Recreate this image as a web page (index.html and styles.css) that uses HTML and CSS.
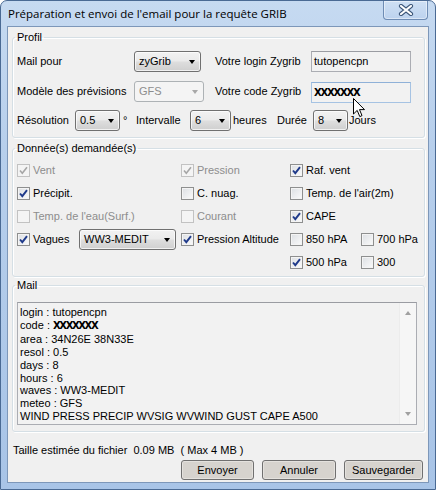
FILE: index.html
```html
<!DOCTYPE html>
<html lang="fr">
<head>
    <meta charset="UTF-8">
    <title>Préparation et envoi de l'email pour la requête GRIB</title>
    <link rel="stylesheet" href="styles.css">
</head>
<body>
    <div class="window">
        <div class="titlebar">
            <span class="title">Préparation et envoi de l'email pour la requête GRIB</span>
            <div class="close">
                <svg width="16" height="12" viewBox="0 0 16 12">
                    <path d="M3 2 L13 10 M13 2 L3 10" stroke="#3b5578" stroke-width="4.2" stroke-linecap="round"/>
                    <path d="M3 2 L13 10 M13 2 L3 10" stroke="#ffffff" stroke-width="2.2" stroke-linecap="round"/>
                </svg>
            </div>
        </div>

        <div class="client">
            <fieldset class="group profil">
                <legend>Profil</legend>
                <div class="prow">
                    <span>Mail pour</span>
                    <div class="combo w67"><span>zyGrib</span><i class="arrow"></i></div>
                    <span>Votre login Zygrib</span>
                    <div class="field">tutopencpn</div>
                </div>
                <div class="prow r2">
                    <span>Modèle des prévisions</span>
                    <div class="combo w70 disabled"><span>GFS</span><i class="arrow"></i></div>
                    <span>Votre code Zygrib</span>
                    <div class="field hover"><b class="mask">XXXXXXX</b></div>
                </div>
                <div class="prow3">
                    <span class="l-res">Résolution</span>
                    <div class="combo w45"><span>0.5</span><i class="arrow"></i></div>
                    <span class="l-deg">°</span>
                    <span class="l-int">Intervalle</span>
                    <div class="combo w41"><span>6</span><i class="arrow"></i></div>
                    <span class="l-hrs">heures</span>
                    <span class="l-dur">Durée</span>
                    <div class="combo w35"><span>8</span><i class="arrow"></i></div>
                    <span class="l-jrs">Jours</span>
                </div>
            </fieldset>

            <fieldset class="group data">
                <legend>Donnée(s) demandée(s)</legend>
                <div class="grid">
                    <label class="chk off"><i class="cb on"></i>Vent</label>
                    <label class="chk off"><i class="cb on"></i>Pression</label>
                    <label class="chk"><i class="cb on"></i>Raf. vent</label>
                    <span></span>

                    <label class="chk"><i class="cb on"></i>Précipit.</label>
                    <label class="chk"><i class="cb"></i>C. nuag.</label>
                    <label class="chk span2"><i class="cb"></i>Temp. de l'air(2m)</label>

                    <label class="chk off"><i class="cb"></i>Temp. de l'eau(Surf.)</label>
                    <label class="chk off"><i class="cb"></i>Courant</label>
                    <label class="chk"><i class="cb on"></i>CAPE</label>
                    <span></span>

                    <div class="chk">
                        <label class="chk"><i class="cb on"></i>Vagues</label>
                        <div class="combo w97"><span>WW3-MEDIT</span><i class="arrow"></i></div>
                    </div>
                    <label class="chk"><i class="cb on"></i>Pression Altitude</label>
                    <label class="chk"><i class="cb"></i>850 hPA</label>
                    <label class="chk"><i class="cb"></i>700 hPa</label>

                    <span></span>
                    <span></span>
                    <label class="chk"><i class="cb on"></i>500 hPa</label>
                    <label class="chk"><i class="cb"></i>300</label>
                </div>
            </fieldset>

            <fieldset class="group mail">
                <legend>Mail</legend>
                <div class="textarea">
                    <div class="lines">
                        <div>login : tutopencpn</div>
                        <div>code : <b class="mask">XXXXXXX</b></div>
                        <div>area : 34N26E 38N33E</div>
                        <div>resol : 0.5</div>
                        <div>days : 8</div>
                        <div>hours : 6</div>
                        <div>waves : WW3-MEDIT</div>
                        <div>meteo : GFS</div>
                        <div>WIND PRESS PRECIP WVSIG WVWIND GUST CAPE A500</div>
                    </div>
                    <div class="scrollbar">
                        <i class="up"></i>
                        <i class="down"></i>
                    </div>
                </div>
            </fieldset>

            <div class="size">Taille estimée du fichier&nbsp; 0.09 MB &nbsp;( Max 4 MB )</div>

            <div class="buttons">
                <div class="btn b-env">Envoyer</div>
                <div class="btn b-ann">Annuler</div>
                <div class="btn b-sav">Sauvegarder</div>
            </div>
        </div>

        <svg class="cursor" width="13" height="20" viewBox="0 0 13 20">
            <path d="M0.5 0.5 L0.5 16 L4.2 12.4 L6.8 18.6 L9 17.6 L6.5 11.6 L11.5 11.6 Z" fill="#ffffff" stroke="#000000" stroke-width="1"/>
        </svg>
    </div>
</body>
</html>
```

FILE: styles.css
```css
* {
    box-sizing: border-box;
}

body {
    margin: 0;
    font-family: "Liberation Sans", Arial, sans-serif;
    font-size: 11px;
    line-height: 13px;
    color: #000;
    background: #ffffff;
}

.window {
    position: relative;
    width: 436px;
    height: 490px;
    border: 1px solid #4a6a94;
    border-radius: 7px 7px 0 0;
    background: linear-gradient(#c6daf1, #b7cfec 30%, #a8c4e7);
    padding: 0 6px 6px 6px;
    display: flex;
    flex-direction: column;
}

.titlebar {
    height: 25px;
    display: flex;
    align-items: center;
    justify-content: space-between;
    padding-left: 1px;
}

.title {
    font-family: "Open Sans", "Noto Sans", sans-serif;
    font-size: 11.5px;
    color: #000;
    margin-top: -1px;
}

.close {
    align-self: flex-start;
    width: 45px;
    height: 19px;
    margin-right: 1px;
    border: 1px solid #6e8cb4;
    border-top: none;
    border-radius: 0 0 4px 4px;
    background: linear-gradient(#cfe0f4, #bcd2ee);
    box-shadow: inset 0 0 0 1px rgba(255,255,255,0.45);
    display: flex;
    align-items: center;
    justify-content: center;
}

.client {
    flex: 1;
    border: 1px solid #7d97b9;
    background: #f0f0f0;
    padding: 0 3px 0 4px;
    display: flex;
    flex-direction: column;
}

/* group boxes */
.group {
    margin: 0;
    border: 1px solid #d5dfe5;
    border-radius: 3px;
    box-shadow: inset 1px 1px 0 #ffffff, 1px 1px 0 #ffffff;
    min-width: 0;
}

.group legend {
    padding: 0 2px;
    margin-left: -2px;
    line-height: 13px;
}

.profil {
    margin-top: 4px;
    padding: 7px 3px 6px 4px;
}

.data {
    margin-top: 4px;
    padding: 4px 3px 2px 4px;
}

.mail {
    margin-top: 2px;
    padding: 10px 6px 6px 4px;
}

/* profil rows */
.prow {
    display: grid;
    grid-template-columns: 117px 81px 96px 100px;
    align-items: center;
    height: 21px;
}

.prow.r2 {
    margin-top: 8px;
}

.prow3 {
    display: flex;
    align-items: center;
    height: 21px;
    margin-top: 9px;
}

.l-res { width: 58px; }
.l-deg { width: 16px; padding-left: 3px; }
.l-int { width: 54px; }
.l-hrs { width: 46px; padding-left: 2px; }
.l-dur { width: 36px; }
.l-jrs { padding-left: 1px; }

/* combo boxes */
.combo {
    position: relative;
    height: 21px;
    border: 1px solid #707070;
    border-radius: 3px;
    background: linear-gradient(#f2f2f2, #ebebeb 45%, #dddddd 55%, #cfcfcf);
    box-shadow: inset 0 0 0 1px rgba(255,255,255,0.7);
    display: flex;
    align-items: center;
    padding-left: 4px;
}

.combo .arrow {
    position: absolute;
    right: 5px;
    top: 8px;
    width: 0;
    height: 0;
    border-left: 3.5px solid transparent;
    border-right: 3.5px solid transparent;
    border-top: 4px solid #000;
}

.combo.disabled {
    border-color: #adb2b5;
    background: #f4f4f4;
    color: #8d8d8d;
    box-shadow: none;
}

.combo.disabled .arrow {
    border-top-color: #a8a8a8;
}

.w35 { width: 35px; }
.w41 { width: 41px; }
.w45 { width: 45px; }
.w67 { width: 67px; }
.w70 { width: 70px; }
.w97 { width: 97px; }

/* text fields */
.field {
    height: 21px;
    width: 100px;
    border: 1px solid #abadb3;
    border-top-color: #9a9ca2;
    background: #f2f2f2;
    display: flex;
    align-items: center;
    padding-left: 2px;
}

.field.hover {
    height: 21px;
    margin-top: 2px;
    border-color: #a6c3e3;
    border-top-color: #8fb1d8;
}

.mask {
    font-family: "DejaVu Sans", sans-serif;
    font-weight: bold;
    letter-spacing: -1.2px;
    font-size: 10px;
}

/* checkbox grid */
.grid {
    display: grid;
    grid-template-columns: 164px 109px 71px 1fr;
    grid-auto-rows: 23px;
    align-items: center;
}

.span2 {
    grid-column: span 2;
}

.chk {
    display: flex;
    align-items: center;
    gap: 3px;
    white-space: nowrap;
}

.chk .chk {
    width: 59px;
}

.chk.off {
    color: #8d8d8d;
}

.cb {
    width: 13px;
    height: 13px;
    flex: none;
    border: 1px solid #8e8f8f;
    background: linear-gradient(135deg, #dcdfe3, #fbfbfb);
    box-shadow: inset 0 0 0 1px #f4f4f4;
}

.cb.on {
    background-image:
        url("data:image/svg+xml,%3Csvg xmlns='http://www.w3.org/2000/svg' width='11' height='11'%3E%3Cpath d='M2 5.5 L4.3 8.2 L9 2.2' fill='none' stroke='%231f3a8a' stroke-width='1.9'/%3E%3C/svg%3E"),
        linear-gradient(135deg, #dcdfe3, #fbfbfb);
}

.off .cb {
    border-color: #c2c2c2;
    background: #f4f4f4;
    box-shadow: none;
}

.off .cb.on {
    background-image:
        url("data:image/svg+xml,%3Csvg xmlns='http://www.w3.org/2000/svg' width='11' height='11'%3E%3Cpath d='M2 5.5 L4.3 8.2 L9 2.2' fill='none' stroke='%23a6a6a6' stroke-width='1.6'/%3E%3C/svg%3E");
}

/* mail text */
.textarea {
    height: 123px;
    width: 400px;
    border: 1px solid #abadb3;
    border-top-color: #9a9ca2;
    background: #f2f2f2;
    display: flex;
}

.lines {
    flex: 1;
    padding: 3px 0 0 2px;
    line-height: 12.9px;
}

.lines .mask {
    letter-spacing: -1.4px;
}

.scrollbar {
    width: 17px;
    border-left: 1px solid #ececec;
    background: #f6f6f6;
    display: flex;
    flex-direction: column;
    justify-content: space-between;
    align-items: center;
    padding: 8px 0 8px 0;
}

.scrollbar i {
    width: 0;
    height: 0;
    border-left: 3.5px solid transparent;
    border-right: 3.5px solid transparent;
}

.scrollbar .up {
    border-bottom: 4px solid #a0a0a0;
}

.scrollbar .down {
    border-top: 4px solid #a0a0a0;
}

/* bottom */
.size {
    margin-top: 12px;
    padding-left: 1px;
}

.buttons {
    display: flex;
    justify-content: flex-end;
    gap: 8px;
    margin-top: 3px;
    margin-right: 2px;
}

.btn {
    height: 20px;
    border: 1px solid #707070;
    border-radius: 3px;
    background: #d6d3ce;
    box-shadow: inset 0 0 0 1px #e4e2de;
    display: flex;
    align-items: center;
    justify-content: center;
}

.b-env { width: 73px; }
.b-ann { width: 74px; }
.b-sav { width: 79px; }

.cursor {
    position: absolute;
    left: 352px;
    top: 97px;
}
```
